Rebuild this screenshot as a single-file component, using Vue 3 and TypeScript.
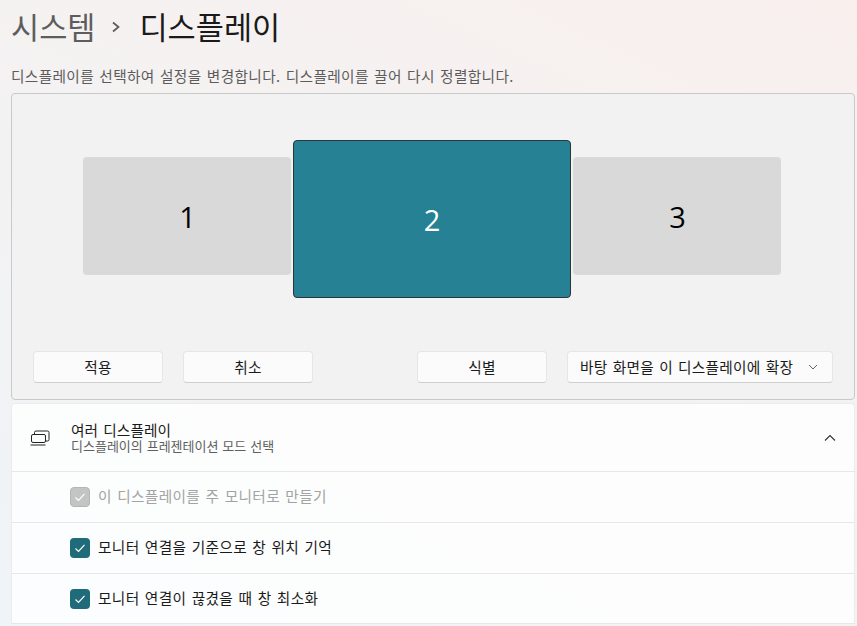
<template>
  <div class="page">
    <h1 class="crumb">
      <span class="parent">시스템</span>
      <svg class="sep" width="10" height="14" viewBox="0 0 10 14"><path d="M2 2.500 7.500 7 2 11.500" fill="none" stroke="#5a5a5a" stroke-width="1.700" /></svg>
      <span class="current">디스플레이</span>
    </h1>
    <p class="desc">디스플레이를 선택하여 설정을 변경합니다. 디스플레이를 끌어 다시 정렬합니다.</p>

    <section class="panel">
      <div class="monitors">
        <div
          v-for="m in monitors"
          :key="m.id"
          class="monitor"
          :class="{ active: m.active }"
        >{{ m.id }}</div>
      </div>
      <div class="actions">
        <button class="btn">적용</button>
        <button class="btn cancel">취소</button>
        <button class="btn identify">식별</button>
        <button class="btn select">
          <span>바탕 화면을 이 디스플레이에 확장</span>
          <svg width="10" height="10" viewBox="0 0 10 10"><path d="M1 3 5 7 9 3" fill="none" stroke="#666" stroke-width="1" /></svg>
        </button>
      </div>
    </section>

    <section class="card">
      <div class="head">
        <svg class="multi" width="20" height="16" viewBox="0 0 20 16">
          <path d="M4.500 4V2.500A1.500 1.500 0 0 1 6 1h11.500A1.500 1.500 0 0 1 19 2.500v7a1.500 1.500 0 0 1-1.500 1.500H15.500" fill="none" stroke="#222" stroke-width="1" />
          <rect x="1.500" y="4.500" width="14" height="8" rx="1.500" fill="none" stroke="#222" stroke-width="1" />
          <path d="M0.500 15H15.500" stroke="#222" stroke-width="1" />
        </svg>
        <div class="head-text">
          <div class="head-title">여러 디스플레이</div>
          <div class="head-sub">디스플레이의 프레젠테이션 모드 선택</div>
        </div>
        <svg class="up" width="12" height="12" viewBox="0 0 12 12"><path d="M1 8.500 6 3.500 11 8.500" fill="none" stroke="#333" stroke-width="1.100" /></svg>
      </div>
      <div v-for="o in options" :key="o.label" class="row" :class="{ disabled: o.disabled }">
        <span class="check">
          <svg width="12" height="12" viewBox="0 0 12 12"><path d="M1.500 6.500 4.500 9.500 10.500 2.800" fill="none" stroke="#fff" stroke-width="1.200" /></svg>
        </span>
        <span class="row-label">{{ o.label }}</span>
      </div>
    </section>
  </div>
</template>

<script setup lang="ts">
const monitors = [
  { id: 1, active: false },
  { id: 2, active: true },
  { id: 3, active: false }
]

const options = [
  { label: '이 디스플레이를 주 모니터로 만들기', disabled: true },
  { label: '모니터 연결을 기준으로 창 위치 기억', disabled: false },
  { label: '모니터 연결이 끊겼을 때 창 최소화', disabled: false }
]
</script>

<style scoped>
.page {
  height: 626px;
  overflow: hidden;
  box-sizing: border-box;
  padding: 0 2px 0 11px;
  background: linear-gradient(205deg, #f9f0ee 0%, #f4f2f2 45%, #eff4f8 100%);
  font-family: "Noto Sans CJK KR", "Noto Sans", sans-serif;
  font-size: 14.67px;
  word-spacing: 1.700px;
  letter-spacing: 0.350px;
  color: #1a1a1a;
}
.crumb {
  display: flex;
  align-items: center;
  height: 52px;
  margin: 0;
  font-size: 30.600px;
  font-weight: 400;
  letter-spacing: 0;
  line-height: 52px;
}
.parent { color: #5d5d5d; }
.sep { margin: 2px 18px 0 16px; }
.desc {
  margin: 15px 0 0;
  height: 26px;
  line-height: 18px;
  color: #5c5c5c;
}
.panel {
  box-sizing: border-box;
  height: 307px;
  background: #f2f2f2;
  border: 1px solid #c9c9c9;
  border-radius: 4px;
  padding: 46px 21px 0;
}
.monitors {
  display: flex;
  gap: 2px;
  align-items: flex-start;
  padding-left: 50px;
  height: 158px;
}
.monitor {
  box-sizing: border-box;
  width: 208px;
  height: 118px;
  margin-top: 17px;
  padding-left: 1px;
  display: flex;
  align-items: center;
  justify-content: center;
  background: #d9d9d9;
  border-radius: 4px;
  font-family: "Open Sans", sans-serif;
  font-size: 29px;
  letter-spacing: 0;
  color: #000;
}
.monitor.active {
  width: 278px;
  height: 158px;
  margin-top: 0;
  padding-left: 0;
  background: #258193;
  border: 1px solid #2b3638;
  color: #fff;
}
.actions {
  display: flex;
  margin-top: 53px;
}
.btn {
  box-sizing: border-box;
  width: 130px;
  height: 32px;
  padding: 0 0 2px;
  background: #fbfbfb;
  border: 1px solid #e6e6e6;
  border-bottom-color: #cfcfcf;
  border-radius: 4px;
  font-family: inherit;
  font-size: inherit;
  word-spacing: inherit;
  letter-spacing: 0.250px;
  color: #1a1a1a;
}
.cancel { margin-left: 20px; }
.identify { margin-left: 104px; }
.select {
  width: 266px;
  margin-left: 20px;
  padding: 0 14px 2px 12px;
  display: flex;
  align-items: center;
  justify-content: space-between;
}
.select svg { margin-top: 2px; }
.card {
  margin-top: 3px;
  background: rgba(255, 255, 255, 0.8);
  border: 1px solid #ececec;
  border-bottom: none;
  border-radius: 4px 4px 0 0;
}
.head {
  display: flex;
  align-items: center;
  height: 67px;
  padding: 0 18px;
}
.multi { margin-right: 21px; }
.head-text { flex: 1; }
.head-title {
  letter-spacing: 0.100px;
  line-height: 16px;
}
.head-sub {
  font-size: 13px;
  word-spacing: 1px;
  letter-spacing: 0;
  line-height: 16px;
  color: #5f5f5f;
}
.row {
  box-sizing: border-box;
  display: flex;
  align-items: center;
  gap: 8px;
  height: 51px;
  padding-left: 58px;
  border-top: 1px solid #e7e7e7;
}
.row-label { margin-top: -3px; }
.check {
  box-sizing: border-box;
  width: 20px;
  height: 20px;
  display: flex;
  align-items: center;
  justify-content: center;
  border-radius: 4px;
  background: #1f6b7a;
}
.disabled { color: #a3a3a3; }
.disabled .check { background: #c4c4c4; border: 1px solid #b5b5b5; }
.row:last-child { border-bottom: 1px solid #e7e7e7; }
</style>

<style>
html, body { margin: 0; }
</style>
